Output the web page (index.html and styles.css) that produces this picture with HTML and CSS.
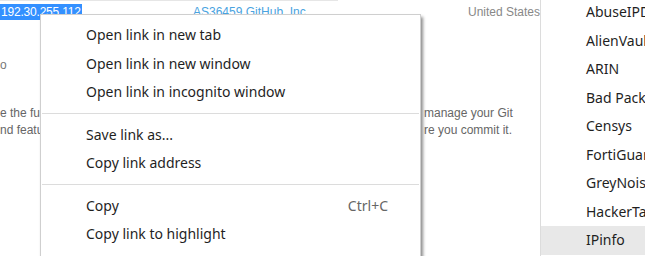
FILE: index.html
```html
<!DOCTYPE html>
<html lang="en">
  <head>
    <meta charset="UTF-8" />
    <meta name="viewport" content="width=device-width, initial-scale=1.0" />
    <title>IP lookup</title>
    <link rel="stylesheet" href="styles.css">
  </head>
  <body>
    <div class="page">
      <main class="results">
        <div class="top-rule"></div>
        <div class="result-row">
          <span class="ip"><span class="selected">192.30.255.112</span></span>
          <span class="asn">AS36459 GitHub, Inc.</span>
          <span class="country">United States</span>
        </div>

        <div class="label">o</div>

        <div class="desc">
          <div class="desc-line">
            <span class="desc-left">e the full</span>
            <span class="desc-right">manage your Git</span>
          </div>
          <div class="desc-line">
            <span class="desc-left">nd features</span>
            <span class="desc-right">re you commit it.</span>
          </div>
        </div>
      </main>

      <aside class="lookup-list">
        <div class="lookup-item">AbuseIPDB</div>
        <div class="lookup-item">AlienVault</div>
        <div class="lookup-item">ARIN</div>
        <div class="lookup-item">Bad Packets</div>
        <div class="lookup-item">Censys</div>
        <div class="lookup-item">FortiGuard</div>
        <div class="lookup-item">GreyNoise</div>
        <div class="lookup-item">HackerTarget</div>
        <div class="lookup-item active">IPinfo</div>
      </aside>
    </div>

    <!-- context menu over the page -->
    <div class="context-menu">
      <div class="menu-item">Open link in new tab</div>
      <div class="menu-item">Open link in new window</div>
      <div class="menu-item">Open link in incognito window</div>
      <div class="menu-sep"></div>
      <div class="menu-item">Save link as...</div>
      <div class="menu-item">Copy link address</div>
      <div class="menu-sep"></div>
      <div class="menu-item">
        <span>Copy</span>
        <span class="shortcut">Ctrl+C</span>
      </div>
      <div class="menu-item">Copy link to highlight</div>
    </div>
  </body>
</html>
```

FILE: styles.css
```css
* {
  margin: 0;
  padding: 0;
  box-sizing: border-box;
}

body {
  font-family: "Liberation Sans", Arial, sans-serif;
  background: #fff;
  overflow: hidden;
  height: 256px;
  position: relative;
}

.page {
  display: flex;
  height: 256px;
  overflow: hidden;
}

.results {
  flex: none;
  width: 540px;
  overflow: hidden;
  font-size: 12px;
  color: #777;
}

.top-rule {
  width: 338px;
  height: 1px;
  background: #e6e6e6;
}

.result-row {
  display: grid;
  grid-template-columns: 193px 275px 1fr;
  padding-top: 4px;
  line-height: 15px;
  white-space: nowrap;
}

.selected {
  background: #3390ff;
  color: #fff;
  padding: 1px 1px 1px 1px;
  letter-spacing: -0.2px;
}

.asn {
  color: #4aa3df;
}

.country {
  color: #888;
  overflow: hidden;
}

.label {
  margin-top: 38px;
  line-height: 15px;
  color: #777;
}

.desc {
  margin-top: 32px;
  line-height: 17px;
  color: #666;
}

.desc-line {
  display: grid;
  grid-template-columns: 424px 1fr;
  white-space: nowrap;
}

.desc-left {
  overflow: hidden;
}

.lookup-list {
  flex: 1;
  min-width: 0;
  overflow: hidden;
  border-left: 1px solid #dcdcdc;
  margin-top: -2px;
  font-family: "Noto Sans", sans-serif;
  font-size: 14px;
  color: #1f1f1f;
}

.lookup-item {
  height: 28.5px;
  line-height: 28.5px;
  padding-left: 45px;
  white-space: nowrap;
  overflow: hidden;
}

.lookup-item.active {
  background: #e8e8e8;
}

.context-menu {
  position: absolute;
  left: 40px;
  top: 14px;
  width: 381px;
  height: 242px;
  background: #fff;
  border: 1px solid #cfcfcf;
  border-bottom: none;
  box-shadow: 2px 3px 3px rgba(0, 0, 0, 0.45);
  padding-top: 6px;
  font-family: "Noto Sans", sans-serif;
  font-size: 14px;
  color: #1f1f1f;
}

.menu-item {
  display: flex;
  justify-content: space-between;
  height: 28.5px;
  line-height: 28.5px;
  padding: 0 32px 0 45px;
}

.shortcut {
  color: #666;
}

.menu-sep {
  height: 1px;
  margin: 6px 1px 7px;
  background: #dcdcdc;
}
```
